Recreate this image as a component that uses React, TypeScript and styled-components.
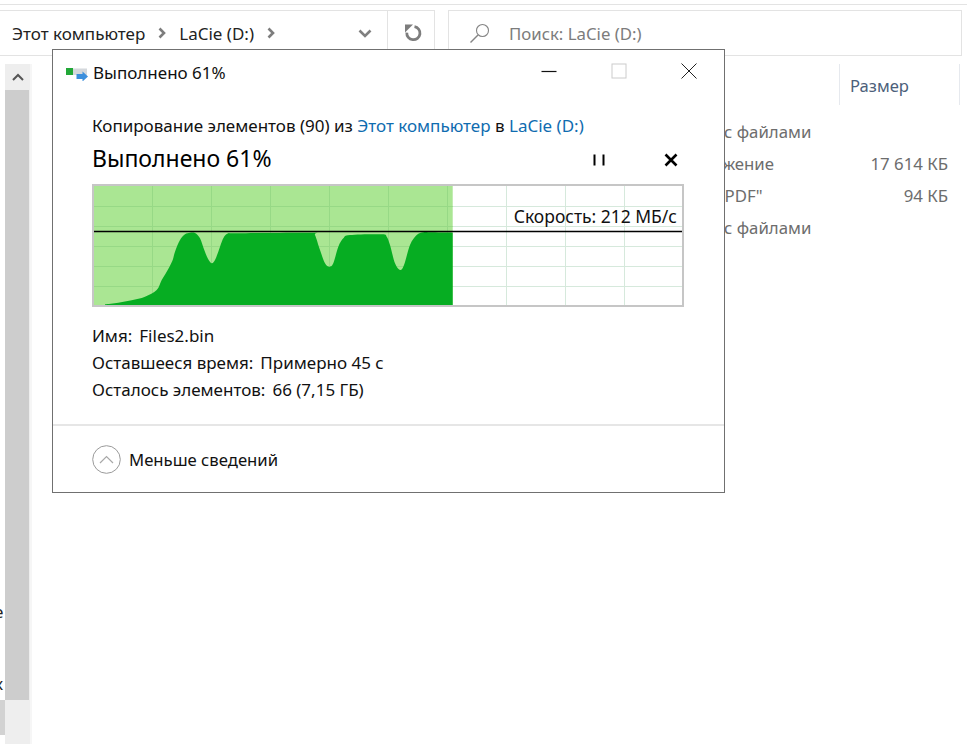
import React from 'react'
import styled, { createGlobalStyle } from 'styled-components'

const FONT = '"Noto Sans", "Open Sans", sans-serif'

const Global = createGlobalStyle`
  html, body {
    margin: 0;
    padding: 0;
    background: #fff;
    overflow: hidden;
  }
`

const Page = styled.div`
  position: relative;
  width: 967px;
  height: 744px;
  overflow: hidden;
  font-family: ${FONT};
  background: #fff;
  color: #1a1a1a;
`

/* --- explorer behind the dialog --- */

const TopStrip = styled.div`
  height: 4px;
  border-bottom: 1px solid #e3e3e3;
`

const ToolRow = styled.div`
  display: flex;
  margin-top: 5px;
  height: 46px;
  gap: 13px;
`

const AddressBar = styled.div`
  display: flex;
  align-items: center;
  width: 435px;
  box-sizing: border-box;
  border: 1px solid #e3e3e3;
  border-left: none;
  padding-left: 12px;
`

const Crumb = styled.span`
  font-size: 17px;
  color: #222;
`

const CrumbArrow = styled.svg`
  width: 8px;
  height: 12px;
  margin: 0 13px;
  fill: none;
  stroke: #7d7d7d;
  stroke-width: 2.6;
`

const Dropdown = styled.svg`
  width: 14px;
  height: 9px;
  margin-left: auto;
  margin-right: 15px;
  fill: none;
  stroke: #808080;
  stroke-width: 2.6;
`

const RefreshBox = styled.div`
  display: flex;
  align-items: center;
  justify-content: center;
  width: 47px;
  height: 100%;
  padding-left: 3px;
  box-sizing: border-box;
  border-left: 1px solid #e3e3e3;
`

const SearchBox = styled.div`
  display: flex;
  align-items: center;
  width: 514px;
  box-sizing: border-box;
  border: 1px solid #e3e3e3;
  padding-left: 20px;
  gap: 19px;
`

const SearchHint = styled.span`
  font-size: 16.8px;
  color: #7c7c7c;
`

const Body = styled.div`
  display: flex;
  margin-top: 8px;
  height: 680px;
`

const EdgeColumn = styled.div`
  width: 5px;
  display: flex;
  flex-direction: column;
  overflow: hidden;
`

const EdgeGlyph = styled.span<{ $top: number }>`
  display: block;
  margin-top: ${(p) => p.$top}px;
  margin-left: -6px;
  font-size: 17px;
  line-height: 20px;
  color: #222;
`

const EdgeBlock = styled.div`
  margin-top: auto;
  margin-bottom: 9px;
  height: 35px;
  background: #d2d2d2;
`

const Scrollbar = styled.div`
  width: 25px;
  display: flex;
  flex-direction: column;
  background: #eeeeee;
  border-right: 2px solid #f6f6f6;
`

const ScrollArrow = styled.div`
  height: 26px;
  display: flex;
  align-items: center;
  justify-content: center;
`

const ScrollThumb = styled.div`
  width: 24px;
  height: 610px;
  background: #cdcdcd;
`

const FileArea = styled.div`
  flex: 1;
  padding-left: 638px;
`

const ColumnHeader = styled.div`
  display: flex;
  height: 41px;
  margin-left: 169px;
  width: 121px;
  box-sizing: border-box;
  border-left: 1px solid #e6e9ee;
  border-right: 1px solid #e6e9ee;
  align-items: center;
  padding: 2px 0 0 10px;
  font-size: 16.6px;
  color: #4c607a;
`

const FileList = styled.div`
  margin-top: 11px;
`

const FileRow = styled.div`
  display: flex;
  justify-content: space-between;
  width: 278px;
  height: 32px;
  line-height: 32px;
  font-size: 16.8px;
  color: #6d6d6d;
  white-space: nowrap;
`

/* --- copy dialog --- */

const Dialog = styled.section`
  position: absolute;
  left: 52px;
  top: 49px;
  width: 673px;
  height: 444px;
  box-sizing: border-box;
  border: 1px solid #707070;
  background: #fff;
  display: flex;
  flex-direction: column;
`

const TitleBar = styled.header`
  display: flex;
  align-items: center;
  height: 46px;
  padding: 0 0 2px 12px;
  box-sizing: border-box;
`

const TitleText = styled.span`
  margin-left: 4px;
  font-size: 17px;
  color: #111;
`

const WindowButtons = styled.div`
  margin-left: auto;
  display: flex;
  align-items: center;
  gap: 54px;
  padding-right: 27px;
  margin-top: -3px;
`

const WindowIcon = styled.svg`
  display: block;
  width: 16px;
  height: 16px;
  fill: none;
`

const Content = styled.div`
  flex: 1;
  padding: 18px 40px 0 39px;
`

const CopyLine = styled.div`
  font-size: 17px;
  line-height: 24px;
  color: #111;
  white-space: nowrap;
`

const SourceLink = styled.span`
  color: #0f6cb0;
`

const StatusRow = styled.div`
  display: flex;
  align-items: center;
  margin-top: 5px;
  height: 30px;
`

const Heading = styled.h1`
  margin: 0;
  font-size: 23px;
  font-weight: 400;
  color: #000;
`

const ControlIcon = styled.svg<{ $gap: number }>`
  width: 14px;
  height: 14px;
  margin-left: ${(p) => p.$gap}px;
  margin-top: 4px;
  stroke: #000;
  fill: none;
`

const Chart = styled.div`
  position: relative;
  width: 592px;
  height: 123px;
  margin-top: 11px;
  box-sizing: border-box;
  border: 2px solid #c6c6c6;
`

const ChartSvg = styled.svg`
  display: block;
  width: 588px;
  height: 119px;
`

const SpeedLabel = styled.span`
  position: absolute;
  right: 5px;
  top: 18px;
  font-size: 17.5px;
  line-height: 24px;
  color: #111;
`

const Details = styled.div`
  margin-top: 15px;
`

const DetailRow = styled.div`
  display: flex;
  gap: 7px;
  height: 27px;
  line-height: 27px;
  font-size: 17px;
  color: #111;
`

const Footer = styled.footer`
  display: flex;
  align-items: center;
  height: 66px;
  border-top: 2px solid #e6e6e6;
  padding-left: 39px;
  gap: 8px;
`

const ToggleIcon = styled.svg`
  width: 29px;
  height: 29px;
  fill: none;
`

const ToggleText = styled.span`
  font-size: 16.7px;
  color: #111;
`

/* --- chart data, page px; frame inner corner is at 94,186 --- */

const ORIGIN_X = 94
const ORIGIN_Y = 186
const BOTTOM = 119
const FILL_END = 452.7 - ORIGIN_X

const CURVE: [number, number][] = [
  [105, 304.3], [118.3, 302.7], [131.7, 300.3], [145, 296.7], [156.7, 290],
  [161.7, 280], [166.7, 271.7], [172.3, 261], [175, 251.7], [180, 240],
  [185, 234.3], [190, 232.7], [195, 233], [200, 238.3], [204.3, 250],
  [207.7, 258.3], [211.7, 263.3], [215, 260], [218.3, 251.7], [223.3, 238.3],
  [228.3, 233.3], [238.3, 233.3], [311.7, 232.7], [315, 235], [320, 250],
  [325, 263.3], [329.3, 266.7], [333.3, 263.3], [338.3, 246.7], [343.3, 238.3],
  [350, 235], [381.7, 234.3], [386.7, 236.7], [390, 245], [395, 263.3],
  [400, 270], [404, 265], [410, 245], [416.7, 235], [423.3, 232.3], [430, 232.3],
  [452.7, 232.7],
]

// catmull-rom through the measured points, the real graph has no corners
const smoothArea = () => {
  const pts = CURVE.map(([x, y]) => [x - ORIGIN_X, y - ORIGIN_Y])
  let d = `M${pts[0][0]} ${BOTTOM}L${pts[0][0]} ${pts[0][1]}`
  for (let i = 0; i < pts.length - 1; i++) {
    const a = pts[Math.max(i - 1, 0)]
    const b = pts[i]
    const c = pts[i + 1]
    const e = pts[Math.min(i + 2, pts.length - 1)]
    const c1x = b[0] + (c[0] - a[0]) / 6
    const c1y = b[1] + (c[1] - a[1]) / 6
    const c2x = c[0] - (e[0] - b[0]) / 6
    const c2y = c[1] - (e[1] - b[1]) / 6
    d += `C${c1x.toFixed(1)} ${c1y.toFixed(1)} ${c2x.toFixed(1)} ${c2y.toFixed(1)} ${c[0].toFixed(1)} ${c[1].toFixed(1)}`
  }
  return `${d}L${FILL_END} ${BOTTOM}Z`
}

const verticals = Array.from({ length: 9 }, (_, i) => 59 * (i + 1) - 0.5)
const horizontals = [20.5, 40.5, 60.5, 80.5, 100.5]

const SpeedChart = () => (
  <ChartSvg viewBox="0 0 588 119">
    {verticals.map((x) => (
      <line key={x} x1={x} x2={x} y1={0} y2={BOTTOM} stroke="#d6e9dc" />
    ))}
    {horizontals.map((y) => (
      <line key={y} x1={0} x2={588} y1={y} y2={y} stroke="#d6e9dc" />
    ))}
    <rect x={0} y={0} width={FILL_END} height={BOTTOM} fill="#aae693" />
    {verticals.filter((x) => x < FILL_END).map((x) => (
      <line key={x} x1={x} x2={x} y1={0} y2={BOTTOM} stroke="#97d986" />
    ))}
    {horizontals.map((y) => (
      <line key={y} x1={0} x2={FILL_END} y1={y} y2={y} stroke="#97d986" />
    ))}
    <path d={smoothArea()} fill="#06ad22" />
    <line x1={0} x2={588} y1={45.5} y2={45.5} stroke="#000" strokeWidth={1.3} />
  </ChartSvg>
)

const CopyIcon = () => (
  <svg width="24" height="18" viewBox="0 0 24 18">
    <rect x="1" y="5" width="7" height="7" fill="#22a838" />
    <rect x="8" y="5.5" width="14" height="6.5" fill="#d4d8dc" />
    <path d="M11.5 11h6V8.5l5.5 5-5.5 5V16h-6z" fill="#3c8fdc" />
  </svg>
)

const Arrow = () => (
  <CrumbArrow viewBox="0 0 8 12">
    <path d="M1.5 1.5 6 6l-4.5 4.5" />
  </CrumbArrow>
)

export default function App() {
  return (
    <Page>
      <Global />
      <TopStrip />
      <ToolRow>
        <AddressBar>
          <Crumb>Этот компьютер</Crumb>
          <Arrow />
          <Crumb>LaCie (D:)</Crumb>
          <Arrow />
          <Dropdown viewBox="0 0 14 9">
            <path d="M1.5 1.5 7 7l5.5-5.5" />
          </Dropdown>
          <RefreshBox>
            <svg width="18" height="18" viewBox="0 0 18 18" fill="none">
              <path d="M1 0.5h8L1 8.5z" fill="#7d7d7d" />
              <path d="M10.5 2.6A6.6 6.6 0 1 1 2.8 8.6" stroke="#7d7d7d" strokeWidth="2.8" />
            </svg>
          </RefreshBox>
        </AddressBar>
        <SearchBox>
          <svg width="21" height="21" viewBox="0 0 21 21" fill="none" stroke="#858585">
            <circle cx="13.5" cy="7.5" r="6" strokeWidth="1.1" />
            <path d="M9 12 1.5 19.5" strokeWidth="1.5" />
          </svg>
          <SearchHint>Поиск: LaCie (D:)</SearchHint>
        </SearchBox>
      </ToolRow>
      <Body>
        <EdgeColumn>
          <EdgeGlyph $top={538}>е</EdgeGlyph>
          <EdgeGlyph $top={52}>к</EdgeGlyph>
          <EdgeBlock />
        </EdgeColumn>
        <Scrollbar>
          <ScrollArrow>
            <svg width="12" height="8" viewBox="0 0 12 8" fill="none" stroke="#555" strokeWidth="2">
              <path d="M1 7l5-5 5 5" />
            </svg>
          </ScrollArrow>
          <ScrollThumb />
        </Scrollbar>
        <FileArea>
          <ColumnHeader>Размер</ColumnHeader>
          <FileList>
            <FileRow><span>Папка с файлами</span></FileRow>
            <FileRow><span>Приложение</span><span>17 614 КБ</span></FileRow>
            <FileRow><span>Файл "PDF"</span><span>94 КБ</span></FileRow>
            <FileRow><span>Папка с файлами</span></FileRow>
          </FileList>
        </FileArea>
      </Body>

      <Dialog>
        <TitleBar>
          <CopyIcon />
          <TitleText>Выполнено 61%</TitleText>
          <WindowButtons>
            <WindowIcon viewBox="0 0 16 16">
              <path d="M0.5 8.5h15" stroke="#111" strokeWidth="1.2" />
            </WindowIcon>
            <WindowIcon viewBox="0 0 16 16">
              <rect x="1" y="1" width="14" height="14" stroke="#cccccc" />
            </WindowIcon>
            <WindowIcon viewBox="0 0 16 16">
              <path d="M0.5 0.5l15 15M15.5 0.5l-15 15" stroke="#222" strokeWidth="1" />
            </WindowIcon>
          </WindowButtons>
        </TitleBar>
        <Content>
          <CopyLine>
            Копирование элементов (90) из <SourceLink>Этот компьютер</SourceLink> в <SourceLink>LaCie (D:)</SourceLink>
          </CopyLine>
          <StatusRow>
            <Heading>Выполнено 61%</Heading>
            <ControlIcon $gap={320} viewBox="0 0 14 14">
              <path d="M2.5 1.5v11M11.5 1.5v11" strokeWidth="2" />
            </ControlIcon>
            <ControlIcon $gap={58} viewBox="0 0 14 14">
              <path d="M1.5 1.5l11 11M12.5 1.5l-11 11" strokeWidth="2.6" />
            </ControlIcon>
          </StatusRow>
          <Chart>
            <SpeedChart />
            <SpeedLabel>Скорость: 212 МБ/с</SpeedLabel>
          </Chart>
          <Details>
            <DetailRow><span>Имя:</span><span>Files2.bin</span></DetailRow>
            <DetailRow><span>Оставшееся время:</span><span>Примерно 45 с</span></DetailRow>
            <DetailRow><span>Осталось элементов:</span><span>66 (7,15 ГБ)</span></DetailRow>
          </Details>
        </Content>
        <Footer>
          <ToggleIcon viewBox="0 0 29 29">
            <circle cx="14.5" cy="14.5" r="13.8" stroke="#9a9a9a" strokeWidth="1" />
            <path d="M8 18l6.5-6.5L21 18" stroke="#a8a8a8" strokeWidth="1.2" />
          </ToggleIcon>
          <ToggleText>Меньше сведений</ToggleText>
        </Footer>
      </Dialog>
    </Page>
  )
}
